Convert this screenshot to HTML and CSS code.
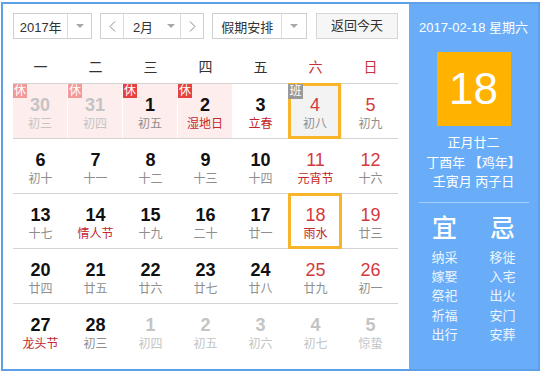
FILE: index.html
```html
<!DOCTYPE html>
<html lang="zh-CN">
<head>
    <meta charset="UTF-8">
    <title>万年历</title>
    <link rel="stylesheet" href="styles.css">
</head>
<body>
    <div class="cal">
        <div class="main">
            <div class="toolbar">
                <div class="select year">
                    <span class="select-text">2017年</span>
                    <span class="select-arrow"><i class="tri"></i></span>
                </div>
                <div class="select month">
                    <span class="nav-btn">
                        <svg width="7" height="11" viewBox="0 0 7 11"><polyline points="6,0.5 1,5.5 6,10.5" fill="none" stroke="#888" stroke-width="1"/></svg>
                    </span>
                    <span class="select-text month-text">2月<i class="tri"></i></span>
                    <span class="nav-btn">
                        <svg width="7" height="11" viewBox="0 0 7 11"><polyline points="1,0.5 6,5.5 1,10.5" fill="none" stroke="#888" stroke-width="1"/></svg>
                    </span>
                </div>
                <div class="select holiday">
                    <span class="select-text">假期安排</span>
                    <span class="select-arrow"><i class="tri"></i></span>
                </div>
                <div class="today-btn">返回今天</div>
            </div>

            <div class="weekdays">
                <div>一</div>
                <div>二</div>
                <div>三</div>
                <div>四</div>
                <div>五</div>
                <div class="red">六</div>
                <div class="red">日</div>
            </div>

            <div class="grid">
                <div class="row">
                    <div class="day other rest"><span class="badge rest-badge">休</span><b>30</b><em>初三</em></div>
                    <div class="day other rest"><span class="badge rest-badge">休</span><b>31</b><em>初四</em></div>
                    <div class="day rest"><span class="badge rest-badge">休</span><b>1</b><em>初五</em></div>
                    <div class="day rest"><span class="badge rest-badge">休</span><b>2</b><em class="fest">湿地日</em></div>
                    <div class="day"><b>3</b><em class="fest">立春</em></div>
                    <div class="day weekend work selected"><span class="badge work-badge">班</span><b>4</b><em>初八</em></div>
                    <div class="day weekend"><b>5</b><em>初九</em></div>
                </div>
                <div class="row">
                    <div class="day"><b>6</b><em>初十</em></div>
                    <div class="day"><b>7</b><em>十一</em></div>
                    <div class="day"><b>8</b><em>十二</em></div>
                    <div class="day"><b>9</b><em>十三</em></div>
                    <div class="day"><b>10</b><em>十四</em></div>
                    <div class="day weekend"><b>11</b><em class="fest">元宵节</em></div>
                    <div class="day weekend"><b>12</b><em>十六</em></div>
                </div>
                <div class="row">
                    <div class="day"><b>13</b><em>十七</em></div>
                    <div class="day"><b>14</b><em class="fest">情人节</em></div>
                    <div class="day"><b>15</b><em>十九</em></div>
                    <div class="day"><b>16</b><em>二十</em></div>
                    <div class="day"><b>17</b><em>廿一</em></div>
                    <div class="day weekend today"><b>18</b><em class="fest">雨水</em></div>
                    <div class="day weekend"><b>19</b><em>廿三</em></div>
                </div>
                <div class="row">
                    <div class="day"><b>20</b><em>廿四</em></div>
                    <div class="day"><b>21</b><em>廿五</em></div>
                    <div class="day"><b>22</b><em>廿六</em></div>
                    <div class="day"><b>23</b><em>廿七</em></div>
                    <div class="day"><b>24</b><em>廿八</em></div>
                    <div class="day weekend"><b>25</b><em>廿九</em></div>
                    <div class="day weekend"><b>26</b><em>初一</em></div>
                </div>
                <div class="row">
                    <div class="day"><b>27</b><em class="fest">龙头节</em></div>
                    <div class="day"><b>28</b><em>初三</em></div>
                    <div class="day other"><b>1</b><em>初四</em></div>
                    <div class="day other"><b>2</b><em>初五</em></div>
                    <div class="day other"><b>3</b><em>初六</em></div>
                    <div class="day other"><b>4</b><em>初七</em></div>
                    <div class="day other"><b>5</b><em>惊蛰</em></div>
                </div>
            </div>
        </div>

        <div class="side">
            <div class="side-date">2017-02-18 星期六</div>
            <div class="side-day">18</div>
            <div class="lunar">
                <div>正月廿二</div>
                <div>丁酉年 【鸡年】</div>
                <div>壬寅月 丙子日</div>
            </div>
            <div class="side-line"></div>
            <div class="advice">
                <div class="advice-col">
                    <div class="advice-title">宜</div>
                    <div>纳采</div>
                    <div>嫁娶</div>
                    <div>祭祀</div>
                    <div>祈福</div>
                    <div>出行</div>
                </div>
                <div class="advice-col">
                    <div class="advice-title">忌</div>
                    <div>移徙</div>
                    <div>入宅</div>
                    <div>出火</div>
                    <div>安门</div>
                    <div>安葬</div>
                </div>
            </div>
        </div>
    </div>
</body>
</html>
```

FILE: styles.css
```css
body {
    margin: 0;
    font-family: 'Liberation Sans', 'Noto Sans CJK SC', sans-serif;
    color: #333;
    background: #fff;
}

.cal {
    display: flex;
    box-sizing: border-box;
    width: 539px;
    height: 369px;
    margin: 2px 0 0 1px;
    border: 2px solid #5d9fe9;
}

.main {
    box-sizing: border-box;
    width: 406px;
    padding: 9px 11px 0 10px;
}

/* toolbar */
.toolbar {
    display: flex;
    height: 26px;
    font-size: 13px;
}

.select {
    display: flex;
    box-sizing: border-box;
    height: 26px;
    border: 1px solid #cfcfcf;
    background: #fff;
}

.select-text {
    display: flex;
    align-items: center;
    justify-content: center;
    color: #333;
}

.select-arrow {
    display: flex;
    align-items: center;
    justify-content: center;
    border-left: 1px solid #dcdcdc;
}

.tri {
    display: block;
    width: 0;
    height: 0;
    border-left: 4px solid transparent;
    border-right: 4px solid transparent;
    border-top: 4px solid #a8a8a8;
}

.year {
    width: 79px;
    margin-right: 8px;
}

.year .select-text {
    width: 54px;
}

.year .select-arrow {
    width: 23px;
}

.month {
    width: 104px;
    margin-right: 8px;
}

.nav-btn {
    display: flex;
    align-items: center;
    justify-content: center;
    width: 22px;
}

.month-text {
    width: 58px;
    border-left: 1px solid #dcdcdc;
    border-right: 1px solid #dcdcdc;
    gap: 14px;
    padding-left: 4px;
    box-sizing: border-box;
}

.holiday {
    width: 95px;
    margin-right: 9px;
}

.holiday .select-text {
    width: 69px;
}

.holiday .select-arrow {
    width: 24px;
}

.today-btn {
    box-sizing: border-box;
    width: 82px;
    height: 26px;
    line-height: 24px;
    text-align: center;
    border: 1px solid #d6d6d6;
    background: #f6f6f6;
    color: #333;
}

/* week header */
.weekdays {
    display: grid;
    grid-template-columns: repeat(7, 55px);
    height: 31px;
    margin-top: 13px;
    border-bottom: 1px solid #d3d3d3;
    font-size: 14px;
    line-height: 31px;
    text-align: center;
}

.weekdays .red {
    color: #c7323a;
}

/* days */
.row {
    display: grid;
    grid-template-columns: repeat(7, 55px);
    height: 54px;
    border-bottom: 1px solid #d3d3d3;
}

.row:last-child {
    border-bottom: none;
}

.day {
    position: relative;
    box-sizing: border-box;
    padding-top: 10px;
    text-align: center;
}

.day b {
    display: block;
    font-size: 18px;
    line-height: 22px;
    font-weight: bold;
    color: #111;
}

.day em {
    display: block;
    font-style: normal;
    font-size: 12px;
    line-height: 16px;
    color: #8e8e8e;
}

.day em.fest {
    color: #c1272d;
}

.day.weekend b {
    color: #d33a40;
    font-weight: normal;
}

.day.other b,
.day.other em {
    color: #c4c4c4;
}

.day.rest {
    background: #fdeded;
    border-right: 1px solid #fff;
}

.day.selected {
    background: #f3f3f3;
    border-right: 1px solid #fff;
}

.day.selected::after,
.day.today::after {
    content: "";
    position: absolute;
    top: -1px;
    left: 0;
    right: 1px;
    bottom: -1px;
    border: 3px solid #f7b52c;
}

.badge {
    position: absolute;
    top: 0;
    left: 0;
    z-index: 1;
    width: 14px;
    height: 14px;
    font-size: 12px;
    line-height: 14px;
    color: #fff;
    text-align: center;
}

.rest-badge {
    background: #e6413f;
}

.other .rest-badge {
    background: #f29a99;
}

.work-badge {
    width: 15px;
    height: 15px;
    background: #999;
}

/* right panel */
.side {
    display: flex;
    flex-direction: column;
    align-items: center;
    width: 129px;
    background: #69adf8;
    color: #fff;
}

.side-date {
    margin-top: 14px;
    font-size: 13px;
    line-height: 20px;
}

.side-day {
    width: 74px;
    height: 74px;
    margin-top: 14px;
    background: #ffb300;
    font-size: 44px;
    line-height: 74px;
    text-align: center;
}

.lunar {
    margin-top: 7px;
    font-size: 13px;
    line-height: 19.5px;
    text-align: center;
}

.side-line {
    width: 110px;
    height: 1px;
    margin-top: 10px;
    background: #a7cefa;
}

.advice {
    display: flex;
    margin-top: 11px;
}

.advice-col {
    width: 58px;
    font-size: 13px;
    line-height: 19.4px;
    text-align: center;
    color: #eef5ff;
}

.advice-title {
    margin-bottom: 6px;
    font-size: 25px;
    line-height: 28px;
    font-weight: 500;
    color: #fff;
}
```
